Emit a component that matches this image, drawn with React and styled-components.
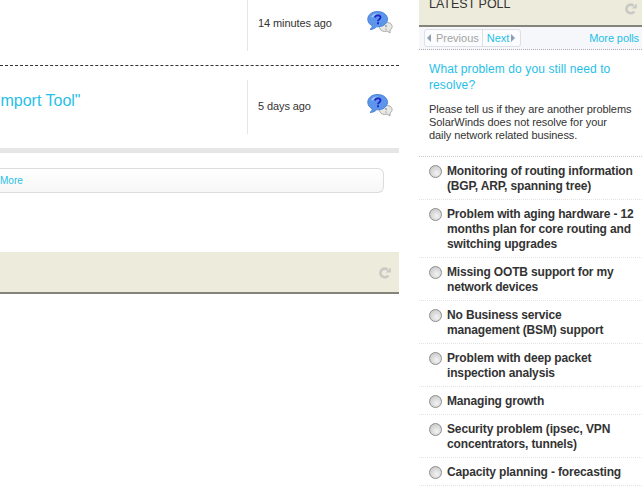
import React from "react";
import styled, { createGlobalStyle } from "styled-components";

const GlobalStyle = createGlobalStyle`
  html, body {
    margin: 0;
    padding: 0;
    background: #fff;
    overflow: hidden;
  }
  body {
    font-family: "Liberation Sans", Arial, sans-serif;
    color: #333;
  }
`;

const Page = styled.div`
  width: 642px;
  height: 489px;
  display: flex;
  justify-content: space-between;
  overflow: hidden;
`;

const Main = styled.div`
  width: 399px;
`;

const Row = styled.div`
  display: flex;
  height: ${(p) => p.$height}px;
  margin-top: ${(p) => p.$top || 0}px;
`;

const TitleCell = styled.div`
  width: 248px;
  flex: none;
  overflow: hidden;
  border-right: 1px solid #e6e6e6;
  padding-top: 11px;
  box-sizing: border-box;
`;

const RowTitle = styled.a`
  display: block;
  margin-left: -4px;
  color: #1fc0e8;
  font-size: 16px;
  line-height: 20px;
  white-space: nowrap;
`;

const TimeCell = styled.div`
  flex: 1;
  display: flex;
  align-items: center;
  justify-content: space-between;
  padding: 0 6px ${(p) => p.$lift}px 10px;
  font-size: 11px;
  letter-spacing: -0.1px;
  color: #333;
`;

const Dashed = styled.div`
  margin-top: 14px;
  border-top: 1px dashed #333;
`;

const Bar = styled.div`
  height: 5px;
  margin-top: 14px;
  background: #e6e6e6;
`;

const MoreBox = styled.div`
  width: 384px;
  height: 25px;
  margin-top: 15px;
  box-sizing: border-box;
  border: 1px solid #dcdcdc;
  border-left: 0;
  border-radius: 0 6px 6px 0;
  background: linear-gradient(#fff, #f6f6f6);
  font-size: 10px;
  line-height: 23px;
  color: #1fc0e8;
`;

const Footer = styled.div`
  height: 42px;
  margin-top: 59px;
  box-sizing: border-box;
  background: #edebdc;
  border-bottom: 2px solid #85847a;
  display: flex;
  align-items: center;
  justify-content: flex-end;
  padding: 2px 8px 0 0;
`;

const Side = styled.div`
  width: 223px;
`;

const PollHeader = styled.div`
  height: 25px;
  background: #edebdc;
  border-bottom: 2px solid #85847a;
  display: flex;
  justify-content: space-between;
  padding: 0 5px 0 10px;
`;

const PollTitle = styled.div`
  font-size: 12.5px;
  line-height: 12px;
  margin-top: -2px;
  color: #333;
`;

const RefreshSlot = styled.div`
  margin-top: 1px;
`;

const PollNav = styled.div`
  height: 23px;
  background: #f5f7fa;
  border-bottom: 1px dotted #aaa;
  display: flex;
  align-items: flex-start;
  justify-content: space-between;
  padding: 2px 3px 0 5px;
  box-sizing: border-box;
  font-size: 11px;
`;

const Pager = styled.div`
  display: flex;
  height: 18px;
  box-sizing: border-box;
  border: 1px solid #dcdfe4;
  border-radius: 3px;
  background: #fbfcfd;
  line-height: 16px;
`;

const PagerItem = styled.span`
  display: flex;
  align-items: center;
  gap: ${(p) => (p.$disabled ? 5 : 2)}px;
  padding: ${(p) => (p.$disabled ? "0 3px 0 2px" : "0 5px 0 4px")};
  color: ${(p) => (p.$disabled ? "#a3a3a3" : "#1fc0e8")};
  & + & {
    border-left: 1px solid #dcdfe4;
  }
`;

const Arrow = styled.i`
  width: 0;
  height: 0;
  border-top: 4px solid transparent;
  border-bottom: 4px solid transparent;
  border-${(p) => (p.$right ? "left" : "right")}: 4px solid #8f9fb3;
`;

const MoreLink = styled.a`
  color: #1fc0e8;
  line-height: 19px;
  letter-spacing: -0.1px;
`;

const Question = styled.div`
  margin: 11px 10px 0;
  font-size: 12px;
  line-height: 16px;
  color: #1fc0e8;
  letter-spacing: 0.1px;
`;

const Intro = styled.p`
  margin: 10px 0 0;
  padding: 0 0 14px 10px;
  font-size: 11px;
  line-height: 13px;
  letter-spacing: -0.07px;
  color: #333;
  border-bottom: 1px dotted #ccc;
`;

const Options = styled.div`
  display: flex;
  flex-direction: column;
`;

const Option = styled.label`
  display: flex;
  align-items: flex-start;
  gap: 5px;
  padding: 7px 5px 5px 10px;
  border-bottom: 1px dotted #e2e2e2;
  font-size: 12px;
  font-weight: bold;
  line-height: 15px;
  letter-spacing: -0.15px;
  color: #333;
`;

const Radio = styled.span`
  flex: none;
  width: 11px;
  height: 11px;
  margin-top: 1px;
  border-radius: 50%;
  border: 1px solid #8d8d8d;
  background: radial-gradient(circle at 60% 65%, #f4f4f4, #cfcfcf 70%, #b5b5b5);
`;

const RefreshIcon = () => (
  <svg width="12" height="12" viewBox="0 0 12 12">
    <path
      d="M9.300 8.400A4.300 4.300 0 1 1 8.800 2.900"
      fill="none"
      stroke="#c9c9c6"
      strokeWidth="2.600"
    />
    <path d="M6.800 5.400h5V.5z" fill="#c9c9c6" />
  </svg>
);

const ChatIcon = () => (
  <svg width="26" height="24" viewBox="0 0 26 24">
    <path
      d="M14 13c3-2 8-2 10 0 2 2 1 5-1 6l0 3-3-2c-3 1-6 0-7-2-1-2-.5-4 1-5z"
      fill="#e8e8e6"
      stroke="#a9a9a6"
      strokeWidth="1"
    />
    <path d="M19 14v2M19 17.500v1" stroke="#777" strokeWidth="1" />
    <path
      d="M10.500 .5C5 .5.800 3.800.800 8.200c0 3 1.800 5.400 4.600 6.700-.2 1.500-1.200 2.700-2.400 3.500 2.800 0 5-1 6.500-2.600 5.500.5 11-2.800 11-7.600C20.500 3.800 16 .5 10.500 .5z"
      fill="#5c95ea"
      stroke="#4b82d8"
      strokeWidth="1"
    />
    <path d="M4 6c1.500-3 5-4 8-3.500-3 .5-5 2-6 4z" fill="#a5c6f5" />
    <path
      d="M8 6.500c.3-1.600 1.500-2.200 2.800-2.200 1.500 0 2.700.9 2.700 2.200 0 1.800-2.500 1.900-2.500 3.800"
      fill="none"
      stroke="#1c23c8"
      strokeWidth="1.800"
    />
    <path d="M11 11.300v2" stroke="#1c23c8" strokeWidth="1.800" />
  </svg>
);

const options = [
  "Monitoring of routing information (BGP, ARP, spanning tree)",
  "Problem with aging hardware - 12 months plan for core routing and switching upgrades",
  "Missing OOTB support for my network devices",
  "No Business service management (BSM) support",
  "Problem with deep packet inspection analysis",
  "Managing growth",
  "Security problem (ipsec, VPN concentrators, tunnels)",
  "Capacity planning - forecasting",
];

const App = () => (
  <Page>
    <GlobalStyle />
    <Main>
      <Row $height={51}>
        <TitleCell />
        <TimeCell $lift={5}>
          14 minutes ago
          <ChatIcon />
        </TimeCell>
      </Row>
      <Dashed />
      <Row $height={54} $top={14}>
        <TitleCell>
          <RowTitle>Import Tool"</RowTitle>
        </TitleCell>
        <TimeCell $lift={2}>
          5 days ago
          <ChatIcon />
        </TimeCell>
      </Row>
      <Bar />
      <MoreBox>More</MoreBox>
      <Footer>
        <RefreshIcon />
      </Footer>
    </Main>
    <Side>
      <PollHeader>
        <PollTitle>LATEST POLL</PollTitle>
        <RefreshSlot>
          <RefreshIcon />
        </RefreshSlot>
      </PollHeader>
      <PollNav>
        <Pager>
          <PagerItem $disabled>
            <Arrow />
            Previous
          </PagerItem>
          <PagerItem>
            Next
            <Arrow $right />
          </PagerItem>
        </Pager>
        <MoreLink>More polls</MoreLink>
      </PollNav>
      <Question>What problem do you still need to resolve?</Question>
      <Intro>
        Please tell us if they are another problems
        <br />
        SolarWinds does not resolve for your
        <br />
        daily network related business.
      </Intro>
      <Options>
        {options.map((text) => (
          <Option key={text}>
            <Radio />
            <span>{text}</span>
          </Option>
        ))}
      </Options>
    </Side>
  </Page>
);

export default App;
